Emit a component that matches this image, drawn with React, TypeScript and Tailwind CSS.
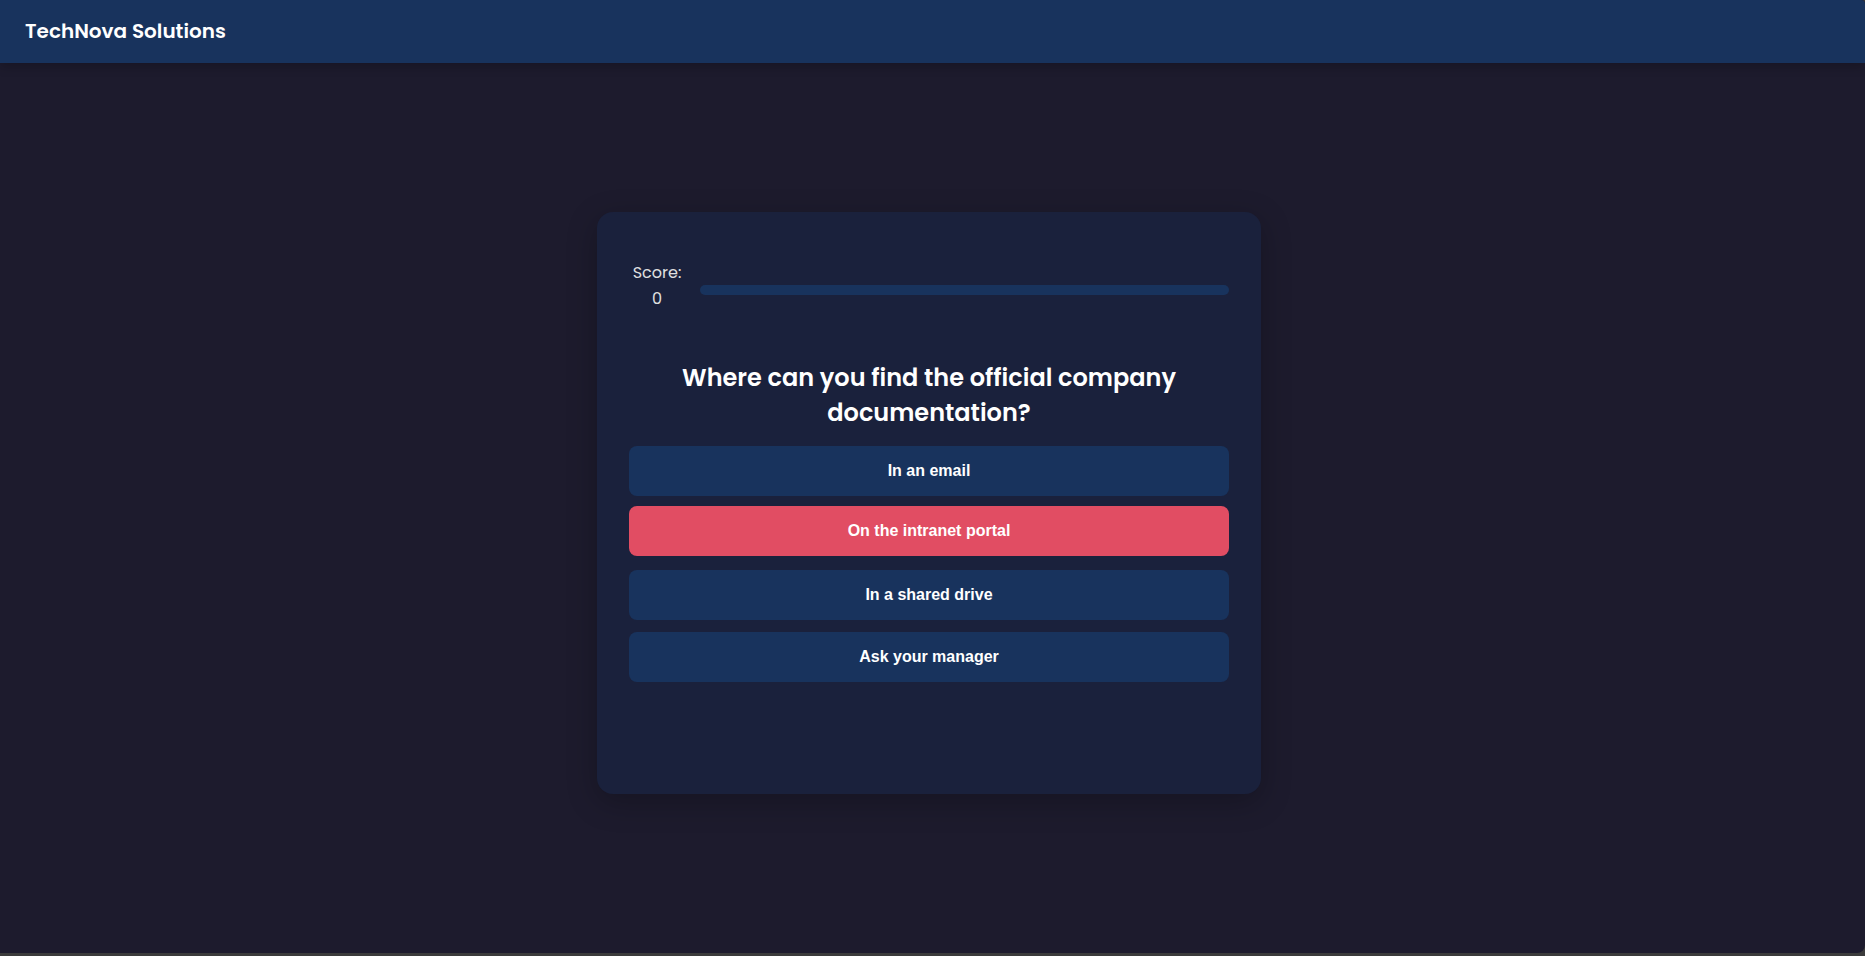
import { useState } from "react";

const answers = [
  "In an email",
  "On the intranet portal",
  "In a shared drive",
  "Ask your manager",
];

export default function App() {
  const [active, setActive] = useState(1);

  return (
    <div className="flex min-h-screen flex-col bg-[#3b3b3b] pb-[3px] font-[Poppins,Inter,sans-serif] text-[#e0e0e0]">
      <div className="flex grow flex-col overflow-hidden rounded-tr-sm rounded-br-lg bg-[#1d1b2d]">
        <header className="z-10 bg-[#18335d] px-[25px] py-[15px] shadow-[0_4px_10px_rgba(0,0,0,0.2)]">
          <div className="text-xl leading-[33px] font-semibold text-white">TechNova Solutions</div>
        </header>

        <main className="flex grow items-center justify-center pr-[7px] pb-[10px]">
          <section className="flex min-h-[582px] w-full max-w-[664px] flex-col rounded-2xl bg-[#1a213c] px-8 pt-12 pb-8 text-center shadow-[0_8px_30px_rgba(0,0,0,0.25)]">
            <div className="flex items-center">
              <p className="w-14 text-base leading-[26px]">
                Score: <span className="block">0</span>
              </p>
              <div
                role="progressbar"
                aria-label="Quiz progress"
                aria-valuenow={0}
                aria-valuemin={0}
                aria-valuemax={100}
                className="mt-[8px] ml-[15px] h-[10px] grow rounded-full bg-[#18335d]"
              />
            </div>

            <h1 className="mt-12 text-2xl leading-[35px] font-semibold text-white">
              Where can you find the official company documentation?
            </h1>

            <div className="mt-4 flex flex-col gap-3">
              {answers.map((answer, i) => (
                <button
                  key={answer}
                  type="button"
                  onClick={() => setActive(i)}
                  className={`h-[50px] rounded-lg font-['Liberation_Sans',Arial,sans-serif] text-base font-bold text-white ${
                    i === active ? "-translate-y-0.5 bg-[#e14d63]" : "bg-[#18335d]"
                  }`}
                >
                  {answer}
                </button>
              ))}
            </div>
          </section>
        </main>
      </div>
    </div>
  );
}
